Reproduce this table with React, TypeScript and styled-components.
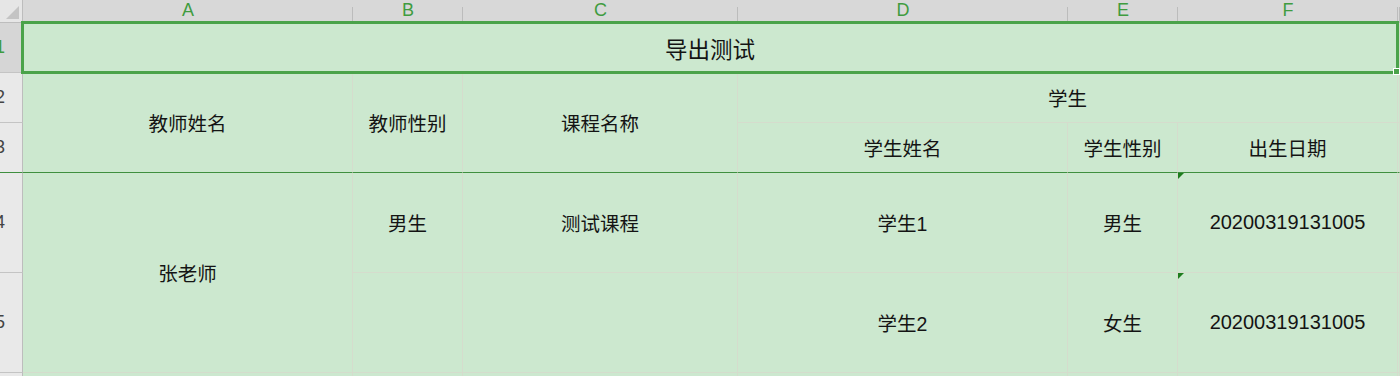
import React from 'react';
import styled, {createGlobalStyle} from 'styled-components';

const GlobalStyle = createGlobalStyle`
  html, body {
    margin: 0;
    padding: 0;
    background: #ffffff;
    overflow: hidden;
  }
`;

const GRID = '#d5dccd';
const FROZEN = '#3f8f3f';
const SELECT = '#4aa34a';

const Sheet = styled.div`
  position: relative;
  display: grid;
  grid-template-columns: 23px 330px 110px 275px 330px 110px 220px 1fr;
  grid-template-rows: 23px 50px 50px 50px 100px 100px 40px;
  width: 1400px;
  height: 376px;
  overflow: hidden;
  font-family: "Liberation Sans", "Noto Sans CJK SC", sans-serif;
  color: #141414;
`;

const Corner = styled.div`
  grid-column: 1;
  grid-row: 1;
  position: relative;
  background: #e6e6e6;
  border-right: 1px solid #bdbdbd;
  border-bottom: 1px solid #bdbdbd;

  &::after {
    content: '';
    position: absolute;
    right: 3px;
    bottom: 3px;
    width: 0;
    height: 0;
    border-left: 13px solid transparent;
    border-bottom: 13px solid #c4c4c4;
  }
`;

const ColHead = styled.div<{$col: number}>`
  grid-column: ${({$col}) => $col};
  grid-row: 1;
  position: relative;
  display: flex;
  align-items: center;
  justify-content: center;
  background: #d8d8d8;
  border-bottom: 1px solid #bdbdbd;
  color: #3f9c3f;
  font-size: 18px;
  padding-bottom: 2px;
  box-sizing: border-box;

  &::after {
    content: '';
    position: absolute;
    right: 0;
    top: 7px;
    bottom: 0;
    width: 1px;
    background: #bcbcbc;
  }
`;

const RowHead = styled.div<{$row: number; $selected?: boolean; $frozen?: boolean}>`
  grid-column: 1;
  grid-row: ${({$row}) => $row};
  display: flex;
  align-items: center;
  justify-content: flex-end;
  padding-right: 17px;
  box-sizing: border-box;
  background: ${({$selected}) => ($selected ? '#d6d6d6' : '#e9e9e9')};
  border-right: 1px solid #bdbdbd;
  border-bottom: 1px solid ${({$frozen}) => ($frozen ? FROZEN : '#c4c4c4')};
  color: ${({$selected}) => ($selected ? '#3f9c3f' : '#444')};
  font-size: 18px;
  white-space: nowrap;
`;

const Cell = styled.div<{$col: string; $row: string; $size?: number; $frozen?: boolean; $flag?: boolean}>`
  grid-column: ${({$col}) => $col};
  grid-row: ${({$row}) => $row};
  position: relative;
  display: flex;
  align-items: center;
  justify-content: center;
  background: #cce8cf;
  border-right: 1px solid ${GRID};
  border-bottom: 1px solid ${({$frozen}) => ($frozen ? FROZEN : GRID)};
  font-size: ${({$size}) => $size ?? 19.5}px;
  white-space: nowrap;

  ${({$flag}) =>
    $flag &&
    `
    &::before {
      content: '';
      position: absolute;
      left: 0;
      top: 0;
      border-top: 6px solid #1d7d1d;
      border-right: 6px solid transparent;
    }
  `}
`;

const Numeric = styled.span`
  font-family: "Liberation Sans", Arial, sans-serif;
  font-size: 20px;
`;

const Selection = styled.div`
  position: absolute;
  left: 21px;
  top: 21px;
  width: 1378px;
  height: 53px;
  box-sizing: border-box;
  border: 3px solid ${SELECT};
  pointer-events: none;
`;

const FillHandle = styled.div`
  position: absolute;
  right: -4px;
  bottom: -4px;
  width: 5px;
  height: 5px;
  background: ${SELECT};
  border: 1px solid #ffffff;
`;

const columns = ['A', 'B', 'C', 'D', 'E', 'F'];

export default function App() {
  return (
    <>
      <GlobalStyle />
      <Sheet>
        <Corner />
        {columns.map((c, i) => (
          <ColHead key={c} $col={i + 2}>
            {c}
          </ColHead>
        ))}
        <ColHead $col={8} />

        <RowHead $row={2} $selected>1</RowHead>
        <RowHead $row={3}>2</RowHead>
        <RowHead $row={4} $frozen>3</RowHead>
        <RowHead $row={5}>4</RowHead>
        <RowHead $row={6}>5</RowHead>
        <RowHead $row={7}>6</RowHead>

        {/* row 1: merged title */}
        <Cell $col="2 / 8" $row="2" $size={22.5}>导出测试</Cell>
        <Cell $col="8" $row="2" />

        {/* rows 2-3: header */}
        <Cell $col="2" $row="3 / 5" $frozen>教师姓名</Cell>
        <Cell $col="3" $row="3 / 5" $frozen>教师性别</Cell>
        <Cell $col="4" $row="3 / 5" $frozen>课程名称</Cell>
        <Cell $col="5 / 8" $row="3">学生</Cell>
        <Cell $col="8" $row="3" />
        <Cell $col="5" $row="4" $frozen>学生姓名</Cell>
        <Cell $col="6" $row="4" $frozen>学生性别</Cell>
        <Cell $col="7" $row="4" $frozen>出生日期</Cell>
        <Cell $col="8" $row="4" $frozen />

        {/* rows 4-5: data */}
        <Cell $col="2" $row="5 / 7">张老师</Cell>
        <Cell $col="3" $row="5">男生</Cell>
        <Cell $col="4" $row="5">测试课程</Cell>
        <Cell $col="5" $row="5">学生1</Cell>
        <Cell $col="6" $row="5">男生</Cell>
        <Cell $col="7" $row="5" $flag>
          <Numeric>20200319131005</Numeric>
        </Cell>
        <Cell $col="8" $row="5" />

        <Cell $col="3" $row="6" />
        <Cell $col="4" $row="6" />
        <Cell $col="5" $row="6">学生2</Cell>
        <Cell $col="6" $row="6">女生</Cell>
        <Cell $col="7" $row="6" $flag>
          <Numeric>20200319131005</Numeric>
        </Cell>
        <Cell $col="8" $row="6" />

        {columns.map((c, i) => (
          <Cell key={`r6-${c}`} $col={String(i + 2)} $row="7" />
        ))}
        <Cell $col="8" $row="7" />

        <Selection>
          <FillHandle />
        </Selection>
      </Sheet>
    </>
  );
}
